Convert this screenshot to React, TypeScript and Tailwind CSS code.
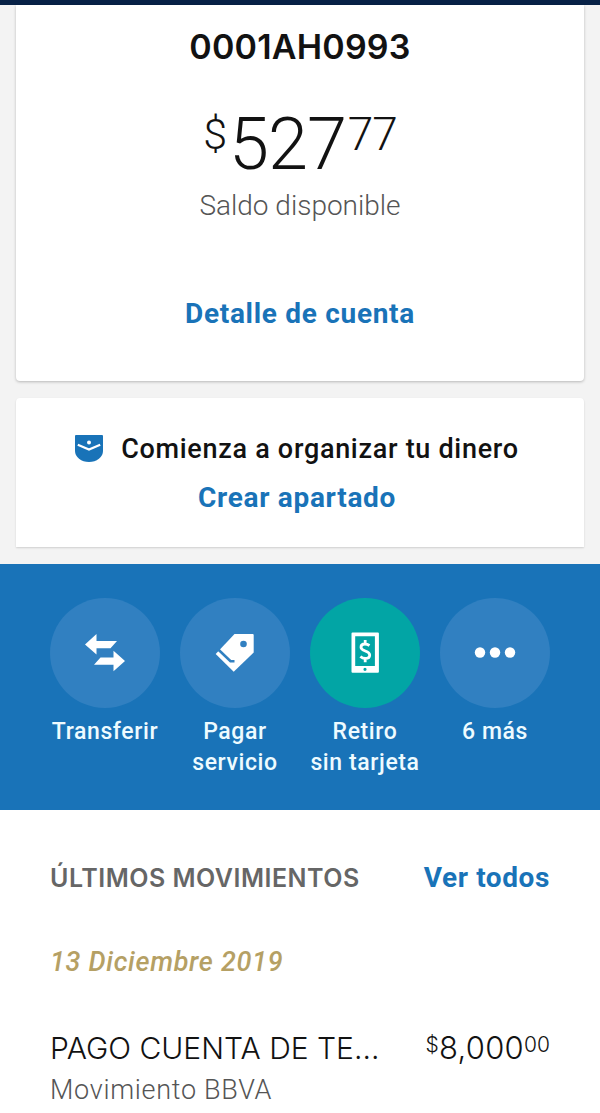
import React from "react";

const TransferIcon = () => (
  <svg width="42" height="42" viewBox="0 0 42 42" fill="#fff">
    <path d="M1 12.500 12.500 2v7H33l-6.500 7.200h-14V22.500z" />
    <path d="M41 29 29.500 18.800v6.700H16.500L10 32.700h19.500V39.200z" />
  </svg>
);

const TagIcon = () => (
  <svg width="42" height="42" viewBox="0 0 42 42">
    <path fill="#fff" d="M20.500 2h18.200a1 1 0 0 1 1 1v17.500L19.700 39.800 1.700 22z" />
    <path fill="none" stroke="#3180c1" strokeWidth="2.600" d="M3.500 16.800 16.500 29.300H20.500" />
    <circle cx="29.500" cy="12" r="3.300" fill="#3180c1" />
  </svg>
);

const PhoneIcon = () => (
  <svg width="42" height="42" viewBox="0 0 42 42">
    <path
      fill="#fff"
      fillRule="evenodd"
      d="M8.500.5h25.400a1 1 0 0 1 1 1v38.200a1 1 0 0 1-1 1H8.500a1 1 0 0 1-1-1V1.500a1 1 0 0 1 1-1zM11.200 4.300v29.700h19.700V4.300zM21 35.700a1.600 1.600 0 1 0 0 3.200 1.600 1.600 0 0 0 0-3.200z"
    />
    <path
      fill="none"
      stroke="#fff"
      strokeWidth="2.800"
      d="M25.500 13.500C24 12.500 22.500 12 20.800 12c-2.300 0-3.800 1.300-3.800 3.200 0 4.300 8.700 3.300 8.700 7.800 0 2.100-1.700 3.500-4.300 3.500-2 0-3.700-.7-5-2M21.200 8v4M21.200 26.500v3.700"
    />
  </svg>
);

const DotsIcon = () => (
  <svg width="42" height="42" viewBox="0 0 42 42" fill="#fff">
    <circle cx="6" cy="20.500" r="5.200" />
    <circle cx="21" cy="20.500" r="5.200" />
    <circle cx="36" cy="20.500" r="5.200" />
  </svg>
);

const PocketIcon = () => (
  <svg width="28" height="28" viewBox="0 0 28 28">
    <path fill="#1973b8" d="M1 0h26a1 1 0 0 1 1 1v15a14 11 0 0 1-28 0V1a1 1 0 0 1 1-1z" />
    <path fill="none" stroke="#fff" strokeWidth="2.200" d="M2.800 9.700 14 14.600l11.200-4.900" />
    <circle cx="14" cy="7.500" r="2" fill="#fff" />
  </svg>
);

// Quick actions shown in the blue band
const actions = [
  { id: 1, lines: ["Transferir"], icon: <TransferIcon />, color: "bg-[#3180c1]" },
  { id: 2, lines: ["Pagar", "servicio"], icon: <TagIcon />, color: "bg-[#3180c1]" },
  { id: 3, lines: ["Retiro", "sin tarjeta"], icon: <PhoneIcon />, color: "bg-[#02a5a5]" },
  { id: 4, lines: ["6 más"], icon: <DotsIcon />, color: "bg-[#3180c1]" },
];

const App = () => {
  return (
    <div className="flex h-[1113px] w-[600px] flex-col overflow-hidden bg-[#f3f3f3] font-['Roboto',sans-serif] whitespace-nowrap text-[#121212]">
      {/* Header edge */}
      <div className="h-[5px] shrink-0 bg-[#072146]" />

      {/* Account balance */}
      <div className="mx-4 flex h-[376px] shrink-0 flex-col items-center rounded-b-[4px] bg-white pt-[25px] shadow-[0_1px_3px_rgba(0,0,0,0.25)]">
        <div className="font-['Inter',sans-serif] text-[34px] leading-[34px] font-semibold tracking-[0.2px]">0001AH0993</div>
        <div className="mt-[45px] flex h-[72px] items-start font-light">
          <span className="mt-[4px] text-[43px] leading-[43px]">$</span>
          <span className="ml-[2px] text-[72px] leading-[72px] tracking-[-1px]">527</span>
          <span className="ml-[2px] mt-[2px] text-[46px] leading-[46px] tracking-[-1px]">77</span>
        </div>
        <div className="mt-[11px] text-[28px] leading-[28px] font-light text-[#555]">Saldo disponible</div>
        <a className="mt-[80px] text-[28px] leading-[28px] font-bold tracking-[0.7px] text-[#1973b8]">Detalle de cuenta</a>
      </div>

      {/* Savings pocket */}
      <div className="mx-4 mt-[17px] flex h-[149px] shrink-0 flex-col items-center rounded-t-[4px] bg-white pt-[37px] pr-[6px] shadow-[0_1px_2px_rgba(0,0,0,0.15)]">
        <div className="flex items-start gap-[18px] text-[27px] leading-[28px] font-medium tracking-[0.7px]">
          <PocketIcon />
          Comienza a organizar tu dinero
        </div>
        <a className="mt-[21px] text-[28px] leading-[28px] font-bold tracking-[0.7px] text-[#1973b8]">Crear apartado</a>
      </div>

      {/* Quick actions */}
      <div className="mt-[17px] flex h-[246px] shrink-0 justify-center gap-5 bg-[#1973b8] pt-[34px]">
        {actions.map((action) => (
          <div className="flex w-[110px] flex-col items-center" key={action.id}>
            <div className={`flex size-[110px] shrink-0 items-center justify-center rounded-full ${action.color}`}>
              {action.icon}
            </div>
            <div className="mt-[8px] text-center text-[23px] leading-[31px] font-medium tracking-[0.6px] text-[#eefbff]">
              {action.lines.map((line) => (
                <div key={line}>{line}</div>
              ))}
            </div>
          </div>
        ))}
      </div>

      {/* Latest movements */}
      <div className="flex grow flex-col bg-white px-[50px] pt-[54px]">
        <div className="flex h-[28px] items-baseline justify-between font-bold">
          <h2 className="font-['Inter',sans-serif] text-[25px] leading-[28px] font-semibold tracking-[0.5px] text-[#666]">ÚLTIMOS MOVIMIENTOS</h2>
          <a className="text-[28px] leading-[28px] tracking-[0.6px] text-[#1973b8]">Ver todos</a>
        </div>
        <div className="mt-[57px] text-[27px] leading-[26px] font-medium italic tracking-[0.7px] text-[#b5a064]">13 Diciembre 2019</div>
        <div className="mt-[58px] flex h-[30px] items-start justify-between font-['Inter',sans-serif] font-light">
          <span className="text-[30px] leading-[30px]">PAGO CUENTA DE TE...</span>
          <span className="flex items-start">
            <span className="mt-[1px] text-[21px] leading-[21px]">$</span>
            <span className="text-[31px] leading-[30px] tracking-[0.3px]">8,000</span>
            <span className="mt-[1px] text-[21px] leading-[21px]">00</span>
          </span>
        </div>
        <div className="mt-[14px] text-[27px] leading-[27px] font-light tracking-[0.7px] text-[#555]">Movimiento BBVA</div>
      </div>
    </div>
  );
};

export default App;
